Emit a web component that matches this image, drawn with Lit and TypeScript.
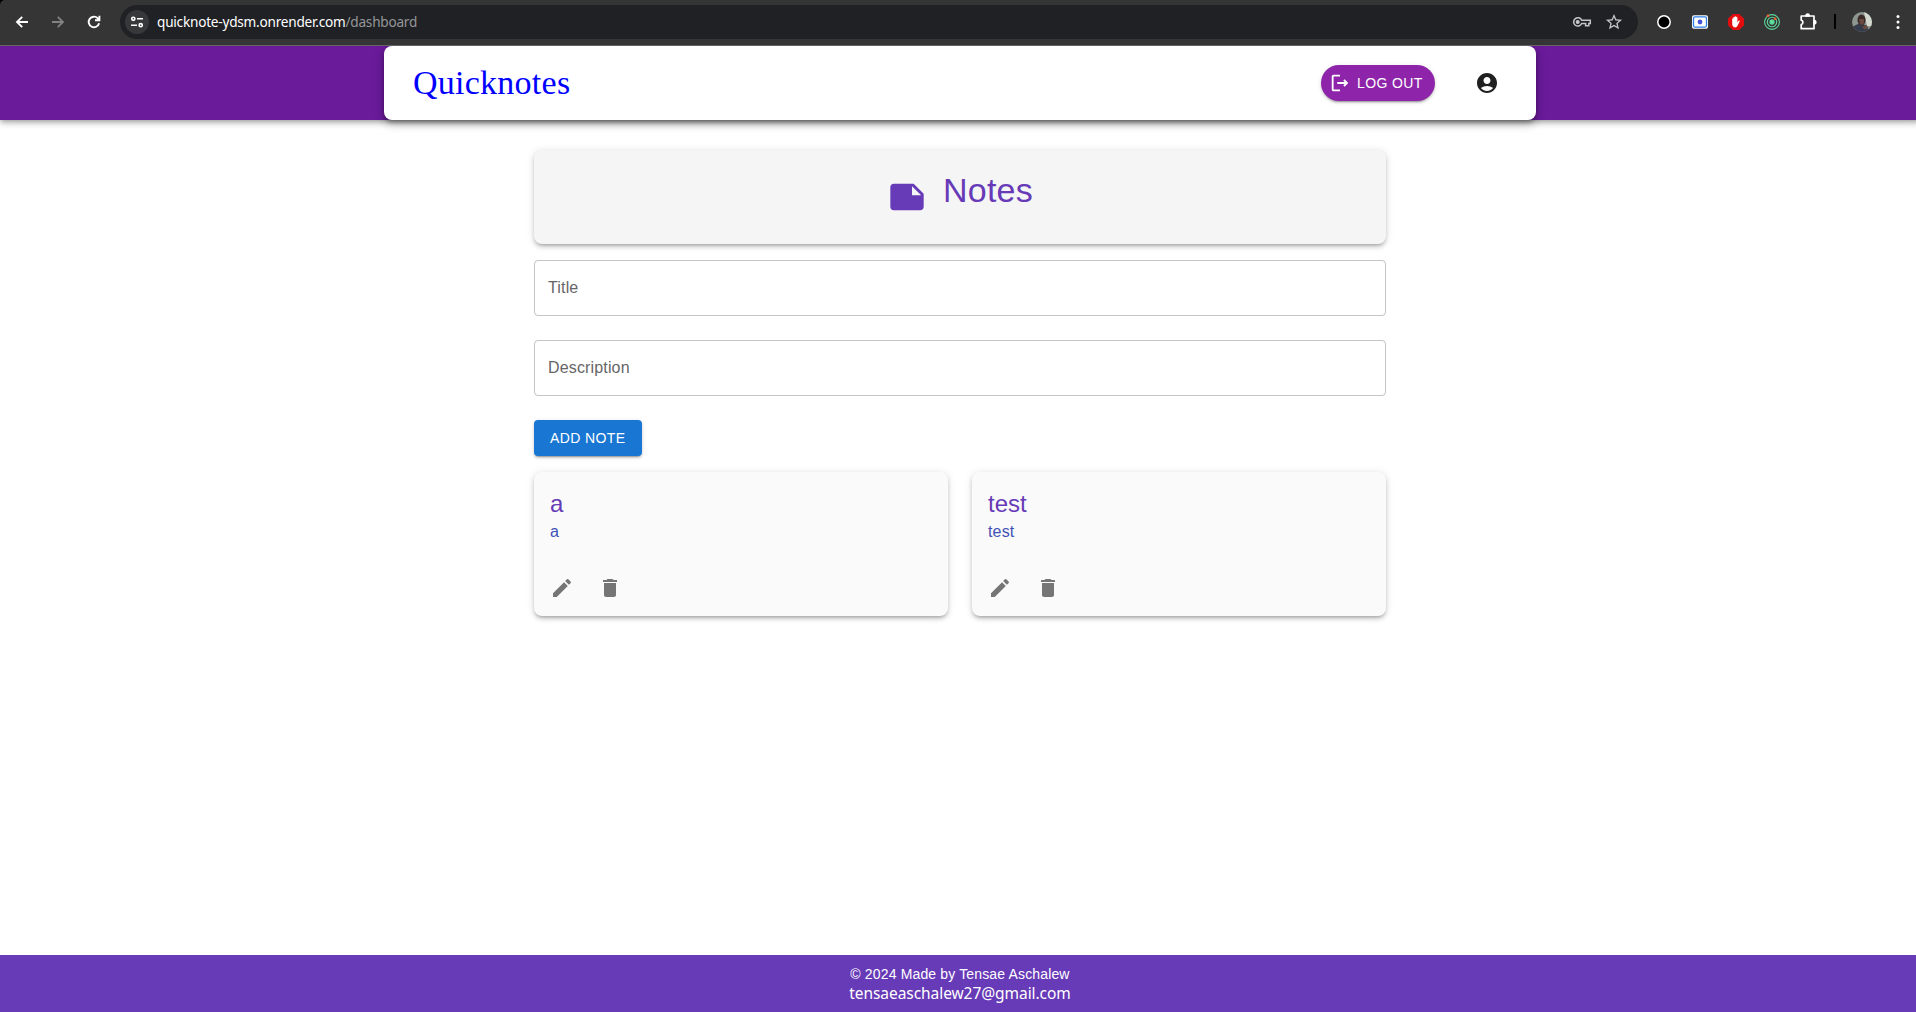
import { LitElement, html, css } from "lit";
import { customElement } from "lit/decorators.js";

const EDIT = "M3 17.25V21h3.75L17.81 9.94l-3.75-3.75zM20.71 7.04c.39-.39.39-1.02 0-1.41l-2.34-2.34a.9959.9959 0 0 0-1.41 0l-1.83 1.83 3.75 3.75z";
const TRASH = "M6 19c0 1.1.9 2 2 2h8c1.1 0 2-.9 2-2V7H6zM19 4h-3.5l-1-1h-5l-1 1H5v2h14z";
const NOTE = "M22 10l-6-6H4c-1.1 0-2 .9-2 2v12.01c0 1.1.9 1.99 2 1.99l16-.01c1.1 0 2-.89 2-1.99zm-7-4.5l5.5 5.5H15z";
const ACCOUNT = "M12 2C6.48 2 2 6.48 2 12s4.48 10 10 10 10-4.48 10-10S17.52 2 12 2zm0 4c1.93 0 3.5 1.57 3.5 3.5S13.93 13 12 13s-3.5-1.57-3.5-3.5S10.07 6 12 6zm0 14c-2.03 0-4.43-.82-6.14-2.88C7.55 15.8 9.68 15 12 15s4.45.8 6.14 2.12C16.43 19.18 14.03 20 12 20z";
const LOGOUT = "m17 8-1.41 1.41L17.17 11H9v2h8.17l-1.58 1.58L17 16l4-4zM5 5h7V3H5c-1.1 0-2 .9-2 2v14c0 1.1.9 2 2 2h7v-2H5z";

const icon = (d: string, size = 24) =>
  html`<svg width=${size} height=${size} viewBox="0 0 24 24" fill="currentColor"><path d=${d}></path></svg>`;

@customElement("browser-bar")
class BrowserBar extends LitElement {
  static styles = css`
    :host { display: flex; align-items: center; height: 46px; box-sizing: border-box; padding: 0 8px 2px 10px;
      background: #353535; border-bottom: 1px solid #636363; border-top-left-radius: 5px; color: #fff;
      font: 13.6px/20px "Noto Sans", sans-serif; letter-spacing: -.22px; }
    svg { display: block; flex: none; }
    .nav { width: 24px; margin-right: 12px; }
    .reload { margin-right: 14px; }
    .dim { color: #828282; }
    .omni { display: flex; align-items: center; flex: 1; height: 34px; border-radius: 17px; background: #202124;
      padding: 0 14px 0 5px; }
    .site { display: grid; place-items: center; width: 24px; height: 24px; border-radius: 50%; background: #37383a; margin-right: 8px; }
    .url { flex: 1; white-space: nowrap; }
    .path { color: #95979a; }
    .soft { color: #c4c5c7; display: flex; gap: 12px; }
    .ext { display: flex; align-items: center; gap: 16px; padding-left: 16px; }
    .sep { width: 2px; height: 15px; background: #000; }
  `;
  render() {
    return html`
      <svg class="nav" width="24" height="24" viewBox="0 0 24 24" fill="none" stroke="#fff" stroke-width="1.9"><path d="M18 12H7.5M12.2 6.8 7 12l5.2 5.2"/></svg>
      <svg class="nav dim" width="24" height="24" viewBox="0 0 24 24" fill="none" stroke="currentColor" stroke-width="1.8"><path d="M6 12h10.5M11.8 6.8 17 12l-5.2 5.2"/></svg>
      <svg class="nav reload" width="24" height="24" viewBox="0 0 24 24" fill="none" stroke="#fff" stroke-width="1.9"><path d="M17.1 13.3a5.3 5.3 0 1 1-1.3-5l1.2 1.3M17.4 5.8v4.4H13"/></svg>
      <div class="omni">
        <div class="site"><svg width="14" height="12" viewBox="0 0 14 12" fill="none" stroke="#fff" stroke-width="1.6"><circle cx="3.3" cy="2.8" r="1.6"/><path d="M7 2.8h6M1 9.2h6"/><circle cx="10.7" cy="9.2" r="1.6"/></svg></div>
        <div class="url">quicknote-ydsm.onrender.com<span class="path">/dashboard</span></div>
        <div class="soft">
          <svg width="20" height="20" viewBox="0 0 20 20" fill="none" stroke="currentColor" stroke-width="1.5"><path d="M9.7 8.3H18.3v3.2h-1.5v2.3h-3.2v-2.3H9.7a4.2 4.2 0 1 1 0-3.2z"/><circle cx="5.7" cy="10" r="1.3" fill="currentColor"/></svg>
          <svg width="20" height="20" viewBox="1.5 1.5 21 21" fill="currentColor"><path d="m22 9.24-7.19-.62L12 2 9.19 8.63 2 9.24l5.46 4.73L5.82 21 12 17.27 18.18 21l-1.63-7.03zM12 15.4l-3.76 2.27 1-4.28-3.32-2.88 4.38-.38L12 6.1l1.71 4.04 4.38.38-3.32 2.88 1 4.28z" transform="translate(1.8 1.8) scale(.85)"/></svg>
        </div>
      </div>
      <div class="ext">
        <svg width="20" height="20" viewBox="0 0 20 20"><circle cx="10" cy="10" r="6.2" fill="#000" stroke="#fff" stroke-width="1.5"/></svg>
        <svg width="20" height="20" viewBox="0 0 20 20"><rect x="2" y="3.3" width="16" height="13.4" rx="2" fill="#fff"/><rect x="3.5" y="4.9" width="13" height="10.2" rx="1.5" fill="#fff" stroke="#2b7de9" stroke-width="1.3"/><circle cx="10" cy="10" r="2.4" fill="#4353d8"/></svg>
        <svg width="20" height="20" viewBox="0 0 20 20"><path d="M6.8 2h6.4L18 6.8v6.4L13.2 18H6.8L2 13.2V6.8z" fill="#e40d0d"/><path d="M6.2 10.5V7c0-.9 1.2-.9 1.2 0V5.4c0-.9 1.3-.9 1.3 0v-.6c0-.9 1.4-.9 1.4 0v.6c0-.9 1.3-.9 1.3 0v5l1-1.5c.6-.9 1.7-.5 1.3.4l-2 4.3c-.6 1.3-1.4 1.8-2.6 1.8-2 0-2.9-1.5-2.9-3.3z" fill="#fff"/></svg>
        <svg width="20" height="20" viewBox="0 0 20 20" fill="none" stroke="#5bd69b" stroke-width="1.1"><circle cx="10" cy="10" r="7.4"/><circle cx="10" cy="10" r="4.7"/><circle cx="10" cy="10" r="2.1" fill="#5be49b"/><circle cx="6" cy="3.7" r="1.3" fill="#f4622a" stroke="none"/><circle cx="13.2" cy="6.8" r="1.3" fill="#f4622a" stroke="none"/></svg>
        <svg width="20" height="20" viewBox="0 0 20 20" fill="none" stroke="#fff" stroke-width="1.7" stroke-linejoin="round"><path d="M3.2 4h12.8v12.7H3.2v-4.2a2.2 2.2 0 0 0 0-4.3z"/><path d="M8 3.8a1.6 1.6 0 0 1 3.2 0zM16.2 8.7a1.6 1.6 0 0 1 0 3.2z" fill="#fff"/></svg>
        <div class="sep"></div>
        <svg width="20" height="20" viewBox="0 0 20 20"><defs><clipPath id="c"><circle cx="10" cy="10" r="10"/></clipPath></defs><g clip-path="url(#c)"><path fill="#8d958f" d="M0 0h20v20H0z"/><path fill="#d4d9d0" d="M12 0h8v14h-5z"/><path fill="#343c4c" d="M0 20v-5l6-3 8 1 4 7z"/><ellipse cx="9.5" cy="8" rx="4" ry="5.5" fill="#3a2b28"/><path fill="#6a4a40" d="M7 7h5v4l-2 2-2-1zM10 15l4-2 2 2-3 3z"/></g></svg>
        <svg width="20" height="20" viewBox="0 0 20 20" fill="#fff"><circle cx="10" cy="4.5" r="1.5"/><circle cx="10" cy="10" r="1.5"/><circle cx="10" cy="15.5" r="1.5"/></svg>
      </div>`;
  }
}

@customElement("app-root")
class AppRoot extends LitElement {
  static styles = css`
    :host { display: block; height: 1012px; background: #fff; overflow: hidden;
      font-family: "Liberation Sans", Arial, sans-serif;
      --e3: 0 3px 3px -2px rgba(0,0,0,.2), 0 3px 4px 0 rgba(0,0,0,.14), 0 1px 8px 0 rgba(0,0,0,.12);
      --e4: 0 2px 4px -1px rgba(0,0,0,.2), 0 4px 5px 0 rgba(0,0,0,.14), 0 1px 10px 0 rgba(0,0,0,.12);
      --e2: 0 3px 1px -2px rgba(0,0,0,.2), 0 2px 2px 0 rgba(0,0,0,.14), 0 1px 5px 0 rgba(0,0,0,.12); }
    .chrome { background: #000; position: relative; z-index: 2; }
    .page { display: flex; flex-direction: column; width: 1920px; height: 966px; }
    svg { display: block; flex: none; }
    header { display: flex; justify-content: center; height: 74px; flex: none; background: #6a1b9a; box-shadow: var(--e4); }
    .bar { display: flex; align-items: center; box-sizing: border-box; width: 1152px; padding: 0 37px 0 29px; background: #fff;
      border-radius: 8px; box-shadow: 0 3px 5px -1px rgba(0,0,0,.2), 0 5px 8px rgba(0,0,0,.14), 0 1px 14px rgba(0,0,0,.12), 0 2px 4px -1px rgba(0,0,0,.2); }
    .brand { flex: 1; color: #00f; font: 34px/42px "Liberation Serif", serif; letter-spacing: .25px; }
    .btn { display: flex; align-items: center; box-sizing: border-box; height: 36px; border: 0; color: #fff; font: 14px/24.5px "Liberation Sans", Arial, sans-serif;
      letter-spacing: .4px; box-shadow: var(--e2); white-space: nowrap; }
    .logout { width: 114px; border-radius: 18px; background: #8e24aa; padding: 0 0 0 7.5px; gap: 6.5px; margin-right: 40px; }
    .who { color: #202020; }
    main { flex: 1; width: 852px; margin: 0 auto; padding-top: 30px; }
    .head { display: flex; justify-content: center; gap: 16px; box-sizing: border-box; height: 94px; background: #f5f5f5; border-radius: 8px;
      box-shadow: var(--e3); color: #673ab7; padding-top: 19px; }
    .head svg { margin-top: 8px; }
    h1 { margin: 0; font: 34px/42px "Liberation Sans", Arial, sans-serif; letter-spacing: .25px; }
    .field { box-sizing: border-box; height: 56px; border: 1px solid rgba(0,0,0,.23); border-radius: 4px; padding: 15px 13px;
      font-size: 16px; line-height: 23px; letter-spacing: .15px; color: #666; }
    .f1 { margin: 16px 0 24px; }
    .add { width: 108px; margin: 24px 0 16px; border-radius: 4px; background: #1976d2; padding: 0 16px; }
    .grid { display: grid; grid-template-columns: 1fr 1fr; gap: 24px; }
    .card { box-sizing: border-box; height: 144px; border-radius: 8px; background: #fafafa; box-shadow: var(--e3); padding: 16px; }
    h2 { margin: 0; font-size: 24px; line-height: 32px; font-weight: 400; color: #673ab7; }
    p { margin: 0; font-size: 16px; line-height: 24px; letter-spacing: .15px; color: #3f51b5; }
    .acts { display: flex; gap: 24px; color: #757575; margin-top: 32px; }
    footer { height: 57px; box-sizing: border-box; flex: none; background: #673ab7; color: #fff; text-align: center; padding-top: 9px; font-size: 14px; line-height: 20px; letter-spacing: .15px; }
    .mail { font: 15.5px/19px "Noto Sans", sans-serif; letter-spacing: -.06px; }
  `;
  render() {
    const notes = [["a", "a"], ["test", "test"]];
    return html`
      <div class="chrome"><browser-bar></browser-bar></div>
      <div class="page">
      <header><div class="bar">
        <div class="brand">Quicknotes</div>
        <button class="btn logout">${icon(LOGOUT, 22)}<span>LOG OUT</span></button>
        <div class="who">${icon(ACCOUNT)}</div>
      </div></header>
      <main>
        <div class="head">${icon(NOTE, 40)}<h1>Notes</h1></div>
        <div class="field f1">Title</div>
        <div class="field">Description</div>
        <button class="btn add">ADD NOTE</button>
        <div class="grid">
          ${notes.map(([t, d]) => html`<div class="card"><h2>${t}</h2><p>${d}</p><div class="acts">${icon(EDIT)}${icon(TRASH)}</div></div>`)}
        </div>
      </main>
      <footer><div>© 2024 Made by Tensae Aschalew</div><div class="mail">tensaeaschalew27@gmail.com</div></footer>
      </div>`;
  }
}
